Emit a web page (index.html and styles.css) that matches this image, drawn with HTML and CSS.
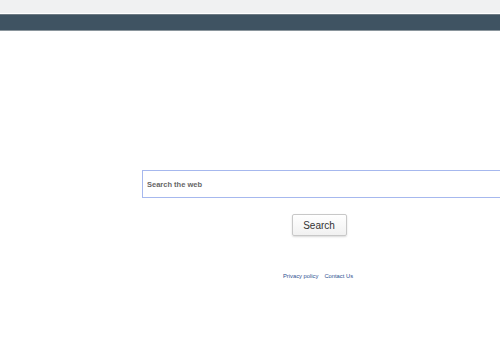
FILE: index.html
```html
<!DOCTYPE html>
<html lang="en">
<head>
    <meta charset="UTF-8">
    <meta name="viewport" content="width=device-width, initial-scale=1.0">
    <title>Search</title>
    <link rel="stylesheet" href="styles.css">
</head>
<body>
    <div class="topbar"></div>
    <div class="header"></div>

    <div class="page">
        <div class="content">
            <form class="search-form" onsubmit="return false;">
                <input class="search-box" type="text" placeholder="Search the web">
                <div class="actions">
                    <button class="search-btn" type="submit">Search</button>
                </div>
            </form>

            <div class="footer-links">
                <a href="#">Privacy policy</a>
                <a href="#">Contact Us</a>
            </div>
        </div>
    </div>
</body>
</html>
```
FILE: styles.css
```css
body {
    margin: 0;
    background: #fff;
    font-family: "Liberation Sans", Arial, sans-serif;
}
.topbar {
    height: 13px;
    background: #f0f1f2;
    border-bottom: 1px solid #fff;
}
.header {
    height: 15px;
    background: #3f5362;
    border-top: 1px solid #6e7b84;
    border-bottom: 1px solid #8a959c;
}
.page {
    width: 100%;
    overflow: hidden;
}
.content {
    width: 636px;
}
.search-form {
    padding-top: 139px;
}
.search-box {
    display: block;
    box-sizing: border-box;
    margin-left: 142px;
    width: 420px;
    height: 28px;
    padding: 0 4px;
    border: 1px solid #a6b8ee;
    outline: none;
    font-family: "Liberation Sans", Arial, sans-serif;
    font-size: 7.5px;
    font-weight: bold;
    color: #555;
}
.search-box::placeholder {
    color: #666;
}
.actions {
    display: flex;
    justify-content: center;
    padding-top: 16px;
}
.search-btn {
    width: 55px;
    height: 22px;
    margin-left: 2px;
    border: 1px solid #c8c8c8;
    border-radius: 2px;
    background: linear-gradient(#fff, #f1f1f1);
    box-shadow: 0 1px 2px rgba(0,0,0,0.15);
    font-family: "Liberation Sans", Arial, sans-serif;
    font-size: 10px;
    color: #333;
    padding: 0;
}
.footer-links {
    display: flex;
    justify-content: center;
    gap: 6px;
    padding-top: 37px;
    padding-bottom: 60px;
    font-size: 5.8px;
}
.footer-links a {
    color: #2c4f8f;
    text-decoration: none;
}
```
